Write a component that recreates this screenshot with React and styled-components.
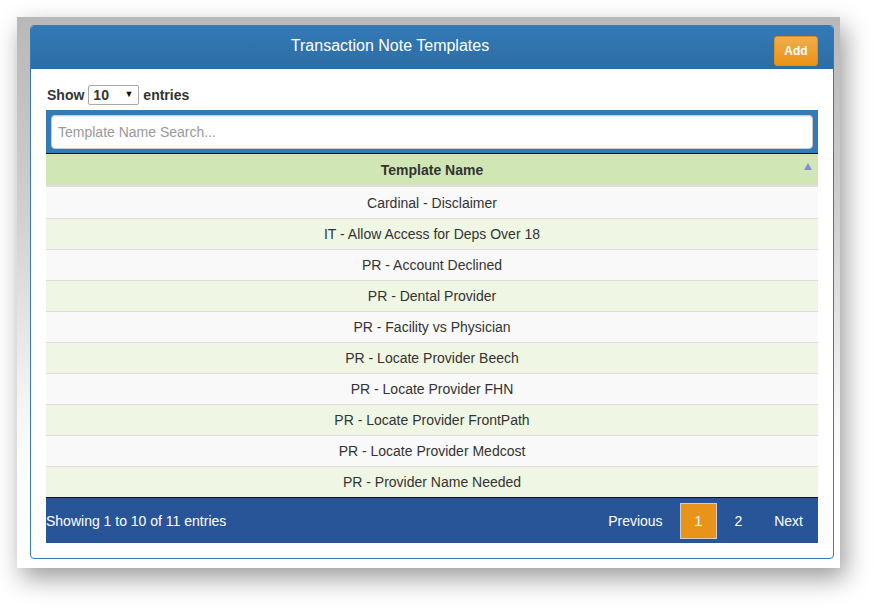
import React from 'react'
import styled, { createGlobalStyle } from 'styled-components'

const GlobalStyle = createGlobalStyle`
  body {
    margin: 0;
    background: #fff;
    font-family: "Liberation Sans", Arial, sans-serif;
    color: #333;
  }
`;

const Page = styled.div`
  width: 888px;
  height: 616px;
  padding: 17px 0 0 17px;
  box-sizing: border-box;
`;

const Frame = styled.div`
  width: 823px;
  height: 551px;
  box-sizing: border-box;
  padding: 8px 6px 9px 13px;
  background: linear-gradient(180deg, #b8b8b8 0%, #cfcfcf 35%, #f4f4f4 70%, #fff 85%);
  box-shadow: 5px 10px 24px rgba(0, 0, 0, 0.4);
`;

const Panel = styled.div`
  height: 100%;
  box-sizing: border-box;
  border: 1px solid #337ab7;
  border-radius: 4px;
  background: #fff;
  display: flex;
  flex-direction: column;
  overflow: hidden;
`;

const Header = styled.div`
  height: 43px;
  flex: none;
  display: flex;
  align-items: center;
  padding: 0 15px;
  background: linear-gradient(180deg, #337ab7 0%, #2e6da4 100%);
  border-bottom: 1px solid #2e6da4;
  box-sizing: border-box;
`;

const Title = styled.div`
  flex: 1;
  text-align: center;
  color: #fff;
  font-size: 16px;
  margin-top: -2px;
`;

const HeaderActions = styled.div`
  width: 84px;
  display: flex;
  justify-content: flex-end;
  align-self: flex-start;
  padding-top: 10px;
`;

const AddButton = styled.button`
  width: 44px;
  height: 30px;
  border: 1px solid #e38d13;
  border-radius: 3px;
  background: linear-gradient(180deg, #f0ad4e 0%, #eb9316 100%);
  color: #fff;
  font-family: inherit;
  font-size: 12px;
  font-weight: bold;
  padding: 0;
`;

const Body = styled.div`
  flex: 1;
  padding: 16px 15px 0 15px;
  display: flex;
  flex-direction: column;
`;

const LengthRow = styled.div`
  display: flex;
  align-items: center;
  gap: 4px;
  font-size: 14px;
  font-weight: bold;
  color: #333;
  height: 20px;
  padding-left: 1px;
  margin-bottom: 5px;
`;

const SelectWrap = styled.div`
  position: relative;
  width: 51px;
  height: 20px;
`;

const Select = styled.select`
  appearance: none;
  width: 100%;
  height: 100%;
  box-sizing: border-box;
  border: 1px solid #aaa;
  border-radius: 2px;
  background: #fff;
  font-family: inherit;
  font-size: 14px;
  font-weight: bold;
  color: #333;
  padding: 0 0 0 4px;
`;

const Caret = styled.span`
  position: absolute;
  right: 6px;
  top: 4px;
  font-size: 9px;
  color: #111;
  pointer-events: none;
`;

const SearchBar = styled.div`
  background: #337ab7;
  padding: 5px 5px 4px 5px;
  border-bottom: 1px solid #111;
`;

const SearchInput = styled.input`
  width: 100%;
  height: 34px;
  box-sizing: border-box;
  border: 1px solid #ccc;
  border-radius: 4px;
  padding: 0 6px;
  font-family: inherit;
  font-size: 14px;
  color: #555;
  box-shadow: inset 0 1px 1px rgba(0, 0, 0, 0.075);
  &::placeholder {
    color: #999;
  }
`;

const HeadCell = styled.div`
  position: relative;
  height: 31px;
  display: flex;
  align-items: center;
  justify-content: center;
  background: #d0e6b5;
  border-bottom: 2px solid #ddd;
  font-size: 14px;
  font-weight: bold;
  color: #333;
`;

const SortIcon = styled.span`
  position: absolute;
  right: 6px;
  top: 9px;
  width: 0;
  height: 0;
  border-left: 4px solid transparent;
  border-right: 4px solid transparent;
  border-bottom: 7px solid #8888dd;
`;

const Row = styled.div`
  height: 30px;
  border-top: ${p => (p.first ? 'none' : '1px solid #ddd')};
  margin-top: ${p => (p.first ? '1px' : '0')};
  display: flex;
  align-items: center;
  justify-content: center;
  font-size: 14px;
  color: #333;
  background: ${p => (p.odd ? '#f9f9f9' : '#eff7e4')};
`;

const Footer = styled.div`
  height: 46px;
  box-sizing: border-box;
  border-top: 1px solid #111;
  background: #285597;
  display: flex;
  align-items: center;
  justify-content: space-between;
  color: #fff;
  font-size: 14px;
`;

const Pager = styled.div`
  display: flex;
  align-items: center;
`;

const PageButton = styled.span`
  margin-left: 2px;
  padding: 7px 14px;
  line-height: 20px;
  border: 1px solid ${p => (p.current ? '#cfcfcf' : 'transparent')};
  background: ${p => (p.current ? '#e8941a' : 'transparent')};
  color: #fff;
  font-size: 14px;
`;

const templates = [
  'Cardinal - Disclaimer',
  'IT - Allow Access for Deps Over 18',
  'PR - Account Declined',
  'PR - Dental Provider',
  'PR - Facility vs Physician',
  'PR - Locate Provider Beech',
  'PR - Locate Provider FHN',
  'PR - Locate Provider FrontPath',
  'PR - Locate Provider Medcost',
  'PR - Provider Name Needed',
]

export default function App() {
  return (
    <Page>
      <GlobalStyle />
      <Frame>
        <Panel>
          <Header>
            <Title>Transaction Note Templates</Title>
            <HeaderActions>
              <AddButton>Add</AddButton>
            </HeaderActions>
          </Header>
          <Body>
            <LengthRow>
              Show
              <SelectWrap>
                <Select defaultValue="10">
                  <option value="10">10</option>
                  <option value="25">25</option>
                  <option value="50">50</option>
                </Select>
                <Caret>▼</Caret>
              </SelectWrap>
              entries
            </LengthRow>
            <SearchBar>
              <SearchInput placeholder="Template Name Search..." />
            </SearchBar>
            <HeadCell>
              Template Name
              <SortIcon />
            </HeadCell>
            {templates.map((name, i) => (
              <Row key={name} first={i === 0} odd={i % 2 === 0}>
                {name}
              </Row>
            ))}
            <Footer>
              <span>Showing 1 to 10 of 11 entries</span>
              <Pager>
                <PageButton>Previous</PageButton>
                <PageButton current>1</PageButton>
                <PageButton>2</PageButton>
                <PageButton>Next</PageButton>
              </Pager>
            </Footer>
          </Body>
        </Panel>
      </Frame>
    </Page>
  )
}
